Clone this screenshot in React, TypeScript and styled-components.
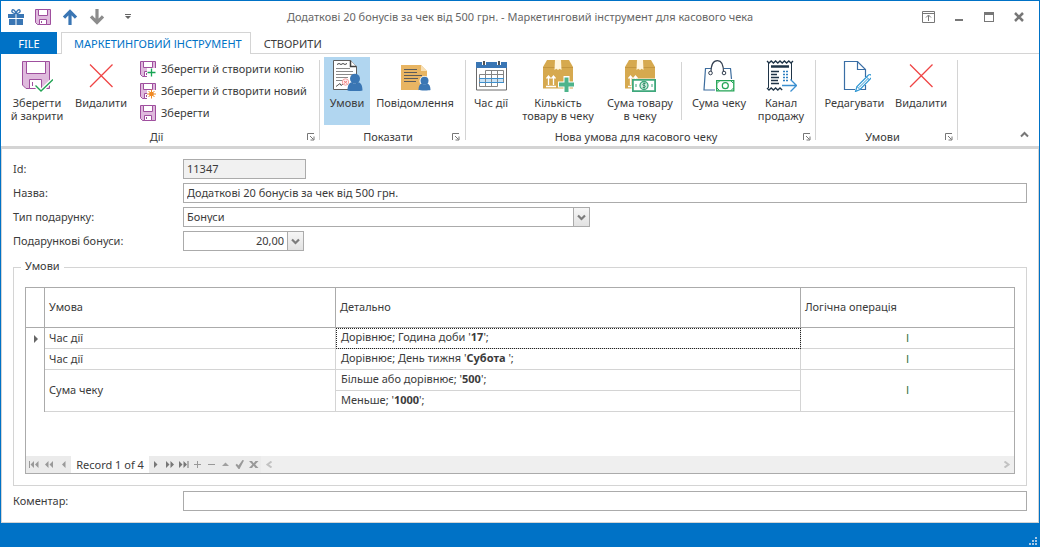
import React from "react";
import styled, { createGlobalStyle } from "styled-components";

const c = {
  blue: "#0072c6",
  text: "#3b3b3b",
  line: "#d4d4d4",
  frame: "#ababab",
  grey: "#777777",
};

const Global = createGlobalStyle`
  *, *::before, *::after { box-sizing: border-box; }
  body {
    margin: 0;
    background: #fff;
    color: ${c.text};
    font: 11px/13px "Noto Sans", "Open Sans", sans-serif;
  }
  button, input, select { font: inherit; color: inherit; margin: 0; border-radius: 0; }
  svg { display: block; flex: none; }
`;

const Window = styled.div`
  min-height: 100vh;
  display: flex;
  flex-direction: column;
  border: 1px solid ${c.blue};
`;

/* ---------- title bar ---------- */

const TitleBar = styled.header`
  display: grid;
  grid-template-columns: 1fr auto 1fr;
  align-items: center;
  height: 31px;
`;
const Title = styled.h1`
  margin: 0;
  font-size: 11px;
  line-height: 16px;
  font-weight: 400;
  color: #666;
  white-space: nowrap;
`;
const QuickAccess = styled.div`
  display: flex;
  padding-left: 1px;
`;
const WindowControls = styled.div`
  display: flex;
  justify-content: flex-end;
  padding-right: 5px;
`;
const BarButton = styled.button<{ $w: number }>`
  display: flex;
  align-items: center;
  justify-content: center;
  width: ${(p) => p.$w}px;
  height: 24px;
  padding: 0;
  border: 0;
  background: none;
`;

/* ---------- ribbon ---------- */

const Tabs = styled.nav`
  display: flex;
  height: 22px;
  box-shadow: inset 0 -1px ${c.line};
`;
const Tab = styled.button<{ $kind?: "file" | "active" }>`
  height: 22px;
  padding: 0 12px;
  border: 1px solid transparent;
  border-width: 1px 1px 0;
  background: none;
  white-space: nowrap;
  ${(p) =>
    p.$kind === "file" &&
    `width: 56px; margin-right: 4px; padding: 0; background: ${c.blue}; color: #fff;`}
  ${(p) =>
    p.$kind === "active" &&
    `padding: 0 8px 0 12px; background: #fff; border-color: ${c.line}; color: ${c.blue};`}
`;
const Ribbon = styled.div`
  display: flex;
  border-bottom: 2px solid ${c.line};
`;
const GroupBox = styled.section<{ $pad: number; $end: number }>`
  display: flex;
  flex-direction: column;
  padding: 3px ${(p) => p.$end}px 0 ${(p) => p.$pad}px;
`;
const GroupBody = styled.div`
  display: flex;
  height: 68px;
`;
const GroupFoot = styled.div`
  display: flex;
  align-items: center;
  height: 18px;
  margin-top: 3px;
`;
const GroupName = styled.h2`
  flex: 1;
  margin: 0;
  padding-bottom: 2px;
  font-size: 11px;
  font-weight: 400;
  text-align: center;
`;
const Launcher = styled.button`
  padding: 0;
  border: 0;
  background: none;
`;
const Divider = styled.div<{ $inner?: boolean }>`
  width: 1px;
  background: ${c.line};
  margin: ${(p) => (p.$inner ? "5px 5px 5px 4px" : "6px 0")};
`;
const BigButton = styled.button<{ $w: number; $on?: boolean }>`
  display: flex;
  flex-direction: column;
  align-items: center;
  gap: 4px;
  width: ${(p) => p.$w}px;
  height: 68px;
  padding: 3px 0 0;
  border: 0;
  background: ${(p) => (p.$on ? "#b1d6f0" : "none")};
  white-space: pre;
`;
const SmallColumn = styled.div`
  display: flex;
  flex-direction: column;
  padding: 1px 0 0 6px;
  width: 181px;
`;
const SmallButton = styled.button`
  display: flex;
  align-items: center;
  gap: 5px;
  height: 22px;
  padding: 0;
  border: 0;
  background: none;
  white-space: nowrap;
`;
const SmallText = styled.span`
  padding-bottom: 2px;
`;
const Collapse = styled.button`
  margin-left: auto;
  align-self: flex-end;
  padding: 8px 10px;
  border: 0;
  background: none;
`;

/* ---------- form ---------- */

const Content = styled.main`
  flex: 1;
  padding: 10px 11px 11px;
  border: 1px solid ${c.line};
`;
const Row = styled.div<{ $last?: boolean }>`
  display: grid;
  grid-template-columns: 170px minmax(0, 1fr);
  align-items: center;
  margin-bottom: ${(p) => (p.$last ? 0 : 4)}px;
`;
const Label = styled.label`
  padding-bottom: 2px;
`;
const Field = styled.div<{ $max?: number }>`
  display: flex;
  position: relative;
  max-width: ${(p) => (p.$max ? `${p.$max}px` : "none")};
`;
const TextBox = styled.input<{ $right?: boolean }>`
  width: 100%;
  height: 20px;
  padding: 0 3px 2px;
  border: 1px solid ${c.frame};
  background: #fff;
  text-align: ${(p) => (p.$right ? "right" : "left")};
  &:read-only { background: #f1f1f1; }
`;
const Select = styled.select`
  appearance: none;
  width: 100%;
  height: 20px;
  padding: 0 20px 2px 3px;
  border: 1px solid ${c.frame};
  background: #fff;
`;
const DropMark = styled.span`
  position: absolute;
  right: 0;
  top: 0;
  display: flex;
  align-items: center;
  justify-content: center;
  width: 17px;
  height: 20px;
  border: 1px solid ${c.frame};
  background: linear-gradient(#f6f6f6, #e2e2e2);
  pointer-events: none;
`;
const DropButton = styled.button`
  display: flex;
  align-items: center;
  justify-content: center;
  flex: none;
  width: 16px;
  height: 20px;
  padding: 0;
  border: 1px solid ${c.frame};
  border-left: 0;
  background: linear-gradient(#f6f6f6, #e2e2e2);
`;
const Fieldset = styled.fieldset`
  margin: 9px 0 5px;
  padding: 13px 7px 7px;
  border: 1px solid ${c.line};
`;
const Legend = styled.legend`
  height: 14px;
  line-height: 12px;
  padding: 0 4px;
`;

/* ---------- grid ---------- */

const Grid = styled.div`
  margin: 0 4px 4px;
  border: 1px solid ${c.frame};
`;
const GridBody = styled.div`
  padding-bottom: 44px;
`;
const Table = styled.table`
  width: 100%;
  table-layout: fixed;
  border-collapse: separate;
  border-spacing: 0;
`;
const Th = styled.th`
  height: 40px;
  padding: 0 4px 2px;
  border: solid ${c.frame};
  border-width: 0 1px 1px 0;
  font-weight: 400;
  text-align: left;
  &:last-child { border-right-width: 0; }
`;
const Td = styled.td<{ $logic?: boolean }>`
  height: 21px;
  padding: 0 4px 2px;
  border: solid ${c.line};
  border-width: 0 1px 1px 0;
  ${(p) => p.$logic && "border-right-width: 0; text-align: center; color: #2c6e3a;"}
`;
const Marker = styled.td`
  padding: 0 0 0 8px;
  border-right: 1px solid ${c.frame};
`;
const Detail = styled.td<{ $focus?: boolean }>`
  height: 21px;
  padding: 0 5px 4px;
  border: solid ${c.line};
  border-width: 0 1px 1px 0;
  white-space: pre;
  ${(p) => p.$focus && "outline: 1px dotted #222; outline-offset: -1px;"}
`;
const Navigator = styled.div`
  display: flex;
  align-items: center;
  height: 17px;
  background: #efefef;
`;
const NavButton = styled.button<{ $w: number; $plain?: boolean }>`
  display: flex;
  align-items: center;
  justify-content: center;
  width: ${(p) => p.$w}px;
  height: 17px;
  padding: 0;
  border: 0;
  background: ${(p) => (p.$plain ? "none" : "#ebebeb")};
`;
const Position = styled.output`
  width: 78px;
  height: 17px;
  line-height: 17px;
  text-align: center;
  background: #fff;
  white-space: nowrap;
`;
const Spacer = styled.span`
  flex: 1;
`;
const StatusBar = styled.footer`
  display: flex;
  justify-content: flex-end;
  align-items: flex-end;
  height: 23px;
  padding: 0 2px 1px 0;
  background: ${c.blue};
`;

/* ---------- icons ---------- */

const Svg = ({ w = 32, h = w, children }: { w?: number; h?: number; children: React.ReactNode }) => (
  <svg width={w} height={h} viewBox={`0 0 ${w} ${h}`} fill="none" aria-hidden="true">
    {children}
  </svg>
);

const purple = "#9f4f9e";
const lilac = "#dfbadd";

const SaveSmall = ({ badge }: { badge?: "plus" | "star" }) => (
  <Svg w={16}>
    <path d="M.5.5h15v15h-13l-2-2z" fill={lilac} stroke={purple} />
    <path d="M3.500.5h9v6h-9z" fill="#fff" stroke={purple} />
    <path d="M4.500 10.500h7v5h-7z" fill="#fff" stroke={purple} />
    <path d="M6.500 12v2" stroke={purple} />
    {badge && <path d="M7 7h9v9H7z" fill="#fff" />}
    {badge === "plus" && <path d="M11.500 7.500v8M7.500 11.500h8" stroke="#17a554" strokeWidth="1.300" />}
    {badge === "star" && (
      <>
        <path d="M11.500 6.500v9M7 11h9M8.500 8l6 6M14.500 8l-6 6" stroke="#f08a24" />
        <circle cx="11.500" cy="11" r="2.300" fill="#f08a24" />
      </>
    )}
  </Svg>
);

const SaveClose = () => (
  <Svg>
    <path d="M1.500 1.500h27v27H5l-3.500-3.500z" fill={lilac} stroke={purple} />
    <path d="M5.500 1.500h19v12h-19z" fill="#fff" stroke={purple} />
    <path d="M8.500 19.500h12v9h-12z" fill="#fff" stroke={purple} />
    <path d="M11.500 22v4" stroke={purple} />
    <path d="M14.500 25.500l5.500 5.500L32 19.500" stroke="#fff" strokeWidth="4" />
    <path d="M14.500 25.500l5.500 5.500L32 19.500" stroke="#23a455" strokeWidth="1.400" />
  </Svg>
);

const Cross = () => (
  <Svg>
    <path d="M5 4.500l22.500 22.500M27.500 4.500L5 27" stroke="#ef4444" strokeWidth="1.300" />
  </Svg>
);

const Person = ({ s = 1 }: { s?: number }) => (
  <g fill="#3a76b4" transform={`scale(${s})`}>
    <circle cx="7.500" cy="5.200" r="5" />
    <path d="M0 17c0-5 1.500-7.500 4-8.200 2 1.600 5 1.600 7 0 2.500.7 4 3.200 4 8.200-1 .8-14 .8-15 0z" />
  </g>
);

const Contract = () => (
  <Svg>
    <path d="M2.500.5h17l6 6v23h-23z" fill="#fff" stroke="#5f5f5f" />
    <path d="M19.500.5v6h6" fill="#fff" stroke="#3f3f3f" strokeWidth="1.500" />
    <path d="M6 4.500l2-1 2 1 2-1 2 1 2-1" stroke="#444" />
    <path d="M5 8.500h14M5 11.500h17M5 14.500h17M5 17.500h12M5 20.500h7" stroke="#8a8a8a" />
    <path d="M5 26.500l4-3 1 2 4-3 2 2" stroke="#555" />
    <circle cx="14.500" cy="22" r="3.200" stroke="#f5a3a3" fill="#fff0f0" />
    <path d="M13 21l3 2.500M16 21l-3 2.500" stroke="#f08080" />
    <g transform="translate(16.500 13.500)">
      <Person />
    </g>
  </Svg>
);

const Message = () => (
  <Svg>
    <path d="M2 5h20l6 6v19H2z" fill="#e8b563" />
    <path d="M22 5v6h6z" fill="#f7dfb5" />
    <path d="M5 9.500h13M5 12.500h13M5 15.500h18M5 18.500h14M5 21.500h12" stroke="#5c5c5c" strokeWidth="1.200" />
    <g transform="translate(19.500 16.500)">
      <circle cx="6" cy="4.500" r="5" fill="#fff" />
      <Person s={0.8} />
    </g>
  </Svg>
);

const Calendar = () => (
  <Svg>
    <path d="M1.500 7.500h30v22.500h-30z" fill="#fff" stroke="#6a6a6a" />
    <path d="M1 2h31v6H1z" fill="#3a76b4" />
    <path d="M7 0h4v5H7zM22 0h4v5h-4z" fill="#fff" />
    <path d="M9 1v4M24 1v4" stroke="#555" strokeWidth="2" />
    <path d="M4 18h25v4H4z" fill="#c9e3f7" />
    <path d="M10.500 10.500h18M4.500 14.500h24M4.500 26.500h18M10.500 10.500v16M16.500 10.500v16M22.500 10.500v16M28.500 10.500v12M4.500 14.500v12" stroke="#858585" />
    <path d="M4 18.500h25M4 22.500h25" stroke="#3f8fcc" />
  </Svg>
);

const Carton = () => (
  <>
    <path d="M5 0h22l4 7v21.500H1V7z" fill="#d6a94f" />
    <path d="M1 7.500h30" stroke="#c4963f" />
    <path d="M13 0h6l.5 10-1.800-1.200L16 10l-1.700-1.200L12.500 10z" fill="#fff5df" />
    <path d="M6.500 25v-8M11.500 25v-8M4.500 18.500l2-2.500 2 2.500M9.500 18.500l2-2.500 2 2.500M4 26.500h10" stroke="#fff" strokeWidth="1.300" />
  </>
);

const CartonPlus = () => (
  <Svg>
    <Carton />
    <path d="M21.500 16h6v5.500h4.500v6h-4.500V32h-6v-4.500H16v-6h5.500z" fill="#fff" />
    <path d="M22.500 17.500h4v5H32v4h-5.500V32h-4v-5.500H17v-4h5.500z" fill="#4db48b" />
  </Svg>
);

const CartonMoney = () => (
  <Svg>
    <Carton />
    <path d="M7.500 18.500H32V32H7.500z" fill="#fff" />
    <path d="M8.900 19.900h22.200v11.200H8.900z" fill="#fff" stroke="#3fa87c" strokeWidth="1.800" />
    <circle cx="20" cy="25.500" r="4" fill="#cdebdd" stroke="#3fa87c" strokeWidth="1.300" />
    <path d="M21.500 23.500h-2l-.7 1 .7 1h1.200l.7 1-.7 1h-2M20.100 22.500v6" stroke="#23805a" strokeWidth=".8" />
    <path d="M12 24v3M28 24v3" stroke="#3fa87c" />
  </Svg>
);

const BagMoney = () => (
  <Svg>
    <path d="M2.500 8.500h25l2 21.500H1z" fill="#fff" stroke="#3d6d9e" strokeWidth="1.200" />
    <path d="M8.500 8h12" stroke="#fff" strokeWidth="2" />
    <path d="M8 12.500C8 4 10.500.700 14.500.700S20.500 4 20.500 12.500" stroke="#333f50" strokeWidth="1.200" />
    <circle cx="7.500" cy="13" r="1.800" fill="#fff" stroke="#333f50" />
    <circle cx="21" cy="13" r="1.800" fill="#fff" stroke="#333f50" />
    <path d="M12 19h20v13H12z" fill="#fff" />
    <path d="M13.700 20.700h17.100v10.100H13.700z" fill="#fff" stroke="#23a455" strokeWidth="1.300" />
    <circle cx="22.300" cy="25.700" r="3" stroke="#23a455" strokeWidth="1.200" />
    <path d="M14 23.500l2.500-2.500M28 21l2.500 2.500M14 28l2.500 2.500M28 30.500l2.500-2.500" stroke="#23a455" />
  </Svg>
);

const Receipt = () => (
  <Svg>
    <path d="M2 1l2 2 2.200-2 2.200 2 2.200-2 2.200 2L15 1l2.200 2 2.200-2 2.200 2 2.200-2L26 3l2-2M2 28l2 2 2.200-2 2.200 2 2.200-2 2.200 2 2.200-2 2.200 2" stroke="#1f3447" strokeWidth="1.300" />
    <path d="M3.500 3v25M26.500 3v18" stroke="#1f3447" />
    <path d="M6 6.500h18" stroke="#1f3447" strokeWidth="2.500" />
    <path d="M6 11.500h8M6 14.500h6M6 17.500h8M6 20.500h7M6 23.500h8" stroke="#1f3447" strokeWidth="1.300" />
    <path d="M18 11.500h5M18 14.500h5M18 17.500h5M18 20.500h5" stroke="#2e7fc1" strokeWidth="1.500" strokeDasharray="2 1" />
    <path d="M17 25.500h14M25.500 19.500l6 6-6 6" stroke="#3b8fd0" strokeWidth="1.300" />
  </Svg>
);

const EditPage = () => (
  <Svg>
    <path d="M16 29.500H5.500v-28h13l8 8V17M26.500 25v4.500H19" fill="#fff" stroke="#3a6ea5" strokeWidth="1.200" />
    <path d="M18.500 1.500v8h8" stroke="#3a6ea5" strokeWidth="1.200" />
    <path d="M16.500 31.500l1.500-5 11.500-11.500q1.500-1 2.500 0t.5 2.500L21 29.500z" fill="#fff" stroke="#2f97d3" strokeWidth="1.200" />
    <path d="M18 26.500l3 3M27.500 17l3 3M20 27.500l9-9" stroke="#2f97d3" />
  </Svg>
);

const Gift = () => (
  <Svg w={16}>
    <path d="M0 5h7.500v4H0zM8.500 5H16v4H8.500zM1 10h6.500v6H1zM8.500 10H15v6H8.500z" fill="#3a76b4" />
    <path d="M8 4.500C6 4.500 3 3.500 4 1.500S7.500 2 8 4.500c.5-2.500 3-5 4-3s-2 3-4 3z" stroke="#3a76b4" strokeWidth="1.400" />
  </Svg>
);

const Arrow = ({ color, down }: { color: string; down?: boolean }) => (
  <Svg w={16}>
    <path d="M8 16V3M2 8.700L8 2.500l6 6.200" stroke={color} strokeWidth="3.200" transform={down ? "rotate(180 8 8)" : undefined} />
  </Svg>
);

const Chevron = () => (
  <Svg w={9} h={7}>
    <path d="M1 1.500l3.500 3.500L8 1.500" stroke="#7c7c7c" strokeWidth="2.200" />
  </Svg>
);

const LaunchIcon = () => (
  <Svg w={8}>
    <path d="M.5 7V.5H7M3 3l3.500 3.500M7 3.500V7H3.500" stroke={c.grey} />
  </Svg>
);

const navPaths: Record<string, React.ReactNode> = {
  first: <path d="M0 1h1v7H0zM5 1v7L1.500 4.500zM9.500 1v7L6 4.500z" />,
  prevPage: <path d="M4.500 1v7L1 4.500zM9 1v7L5.500 4.500z" />,
  prev: <path d="M6.500 1v7L3 4.500z" />,
  next: <path d="M3 1v7l3.500-3.500z" />,
  nextPage: <path d="M1 1v7l3.500-3.500zM5.500 1v7L9 4.500z" />,
  last: <path d="M0 1v7l3.500-3.500zM4.500 1v7L8 4.500zM8.500 1h1v7h-1z" />,
  add: <path d="M1 4h7v1H1zM4 1h1v7H4z" />,
  remove: <path d="M1 4h7v1H1z" />,
  edit: <path d="M1 6h7L4.500 2.500z" />,
  accept: <path d="M.5 5l1.300-1.200L3.500 5.500 7.500 0 9 .5 4.500 9h-1z" />,
  cancel: <path d="M0 1h3l1.700 2.200L6.500 1h3L6.200 4.500 9.500 8h-3L4.700 5.800 3 8H0l3.300-3.500z" />,
};

const NavIcon = ({ name, color }: { name: string; color: string }) => (
  <Svg w={10} h={9}>
    <g fill={color}>{navPaths[name]}</g>
  </Svg>
);

/* ---------- page ---------- */

const Group = (p: {
  name: string;
  pad: number;
  end?: number;
  children: React.ReactNode;
}) => (
  <>
    <GroupBox $pad={p.pad} $end={p.end ?? 4}>
      <GroupBody>{p.children}</GroupBody>
      <GroupFoot>
        <GroupName>{p.name}</GroupName>
        <Launcher aria-label={p.name}>
          <LaunchIcon />
        </Launcher>
      </GroupFoot>
    </GroupBox>
    <Divider />
  </>
);

const Big = (p: { icon: React.ReactNode; label: string; w: number; on?: boolean }) => (
  <BigButton $w={p.w} $on={p.on}>
    {p.icon}
    <span>{p.label}</span>
  </BigButton>
);

const Small = (p: { badge?: "plus" | "star"; label: string }) => (
  <SmallButton>
    <SaveSmall badge={p.badge} />
    <SmallText>{p.label}</SmallText>
  </SmallButton>
);

const navLeft = ["first", "prevPage", "prev"];
const navRight: [string, string][] = [
  ["next", c.grey],
  ["nextPage", c.grey],
  ["last", c.grey],
  ["add", "#999"],
  ["remove", "#999"],
  ["edit", "#a0a0a0"],
  ["accept", "#999"],
  ["cancel", "#999"],
];

export default function App() {
  return (
    <Window>
      <Global />
      <TitleBar>
        <QuickAccess>
          <BarButton $w={27} aria-label="Подарунок"><Gift /></BarButton>
          <BarButton $w={27} aria-label="Зберегти"><SaveSmall /></BarButton>
          <BarButton $w={27} aria-label="Попередній"><Arrow color="#3a76b4" /></BarButton>
          <BarButton $w={28} aria-label="Наступний"><Arrow color="#8c8c8c" down /></BarButton>
          <BarButton $w={34} aria-label="Налаштувати панель">
            <Svg w={6}><path d="M0 0h6v1H0zM0 2h6L3 5z" fill="#666" /></Svg>
          </BarButton>
        </QuickAccess>
        <Title>Додаткові 20 бонусів за чек від 500 грн. - Маркетинговий інструмент для касового чека</Title>
        <WindowControls>
          <BarButton $w={31} aria-label="Параметри стрічки">
            <Svg w={13} h={12}>
              <path d="M.5.5h12v11H.5zM.5 2.500h12M6.500 10V4.500M4 6.500l2.500-2.500L9 6.500" stroke={c.grey} />
            </Svg>
          </BarButton>
          <BarButton $w={30} aria-label="Згорнути">
            <Svg w={8} h={10}><path d="M0 7h8v2H0z" fill={c.grey} /></Svg>
          </BarButton>
          <BarButton $w={30} aria-label="Розгорнути">
            <Svg w={10}><path d="M0 0h10v10H0zM1 3v6h8V3z" fill={c.grey} fillRule="evenodd" /></Svg>
          </BarButton>
          <BarButton $w={30} aria-label="Закрити">
            <Svg w={10}><path d="M1 1l8 8M9 1L1 9" stroke={c.grey} strokeWidth="2.500" /></Svg>
          </BarButton>
        </WindowControls>
      </TitleBar>

      <Tabs>
        <Tab $kind="file">FILE</Tab>
        <Tab $kind="active">МАРКЕТИНГОВИЙ ІНСТРУМЕНТ</Tab>
        <Tab>СТВОРИТИ</Tab>
      </Tabs>

      <Ribbon>
        <Group name="Дії" pad={5}>
          <Big icon={<SaveClose />} label={"Зберегти\nй закрити"} w={62} />
          <Big icon={<Cross />} label="Видалити" w={66} />
          <SmallColumn>
            <Small badge="plus" label="Зберегти й створити копію" />
            <Small badge="star" label="Зберегти й створити новий" />
            <Small label="Зберегти" />
          </SmallColumn>
        </Group>
        <Group name="Показати" pad={4} end={5}>
          <Big icon={<Contract />} label="Умови" w={46} on />
          <Big icon={<Message />} label="Повідомлення" w={90} />
        </Group>
        <Group name="Нова умова для касового чеку" pad={3}>
          <Big icon={<Calendar />} label="Час дії" w={44} />
          <Big icon={<CartonPlus />} label={"Кількість\nтовару в чеку"} w={90} />
          <Big icon={<CartonMoney />} label={"Сума товару\nв чеку"} w={74} />
          <Divider $inner />
          <Big icon={<BagMoney />} label="Сума чеку" w={64} />
          <Big icon={<Receipt />} label={"Канал\nпродажу"} w={60} />
        </Group>
        <Group name="Умови" pad={4}>
          <Big icon={<EditPage />} label="Редагувати" w={69} />
          <Big icon={<Cross />} label="Видалити" w={64} />
        </Group>
        <Collapse aria-label="Згорнути стрічку">
          <Svg w={9} h={7}><path d="M1 5.500L4.500 2 8 5.500" stroke={c.grey} strokeWidth="2" /></Svg>
        </Collapse>
      </Ribbon>

      <Content>
        <Row>
          <Label htmlFor="id">Id:</Label>
          <Field $max={123}><TextBox id="id" value="11347" readOnly /></Field>
        </Row>
        <Row>
          <Label htmlFor="name">Назва:</Label>
          <Field><TextBox id="name" defaultValue="Додаткові 20 бонусів за чек від 500 грн." /></Field>
        </Row>
        <Row>
          <Label htmlFor="type">Тип подарунку:</Label>
          <Field $max={407}>
            <Select id="type"><option>Бонуси</option></Select>
            <DropMark><Chevron /></DropMark>
          </Field>
        </Row>
        <Row>
          <Label htmlFor="bonus">Подарункові бонуси:</Label>
          <Field $max={121}>
            <TextBox id="bonus" defaultValue="20,00" $right />
            <DropButton aria-label="Калькулятор"><Chevron /></DropButton>
          </Field>
        </Row>

        <Fieldset>
          <Legend>Умови</Legend>
          <Grid>
            <GridBody>
              <Table>
                <colgroup>
                  <col style={{ width: 19 }} />
                  <col style={{ width: "29.45%" }} />
                  <col style={{ width: "47.06%" }} />
                  <col />
                </colgroup>
                <thead>
                  <tr>
                    <Th aria-label="Поточний запис" />
                    <Th>Умова</Th>
                    <Th>Детально</Th>
                    <Th>Логічна операція</Th>
                  </tr>
                </thead>
                <tbody>
                  <tr>
                    <Marker>
                      <Svg w={5} h={8}><path d="M0 0v8l4-4z" fill="#666" /></Svg>
                    </Marker>
                    <Td>Час дії</Td>
                    <Detail $focus>Дорівнює; Година доби '<b>17</b>';</Detail>
                    <Td $logic>І</Td>
                  </tr>
                  <tr>
                    <Marker />
                    <Td>Час дії</Td>
                    <Detail>Дорівнює; День тижня '<b>Субота</b> ';</Detail>
                    <Td $logic>І</Td>
                  </tr>
                  <tr>
                    <Marker rowSpan={2} />
                    <Td rowSpan={2}>Сума чеку</Td>
                    <Detail>Більше або дорівнює; '<b>500</b>';</Detail>
                    <Td $logic rowSpan={2}>І</Td>
                  </tr>
                  <tr>
                    <Detail>Меньше; '<b>1000</b>';</Detail>
                  </tr>
                </tbody>
              </Table>
            </GridBody>
            <Navigator>
              {navLeft.map((n) => (
                <NavButton key={n} $w={15} aria-label={n}><NavIcon name={n} color="#999" /></NavButton>
              ))}
              <Position>Record 1 of 4</Position>
              {navRight.map(([n, color]) => (
                <NavButton key={n} $w={14} aria-label={n}><NavIcon name={n} color={color} /></NavButton>
              ))}
              <NavButton $w={16} $plain aria-label="Прокрутити ліворуч">
                <Svg w={7}><path d="M5.500.5l-4 3 4 3" stroke="#c2c2c2" strokeWidth="2" /></Svg>
              </NavButton>
              <Spacer />
              <NavButton $w={16} $plain aria-label="Прокрутити праворуч">
                <Svg w={7}><path d="M1.500.5l4 3-4 3" stroke="#c2c2c2" strokeWidth="2" /></Svg>
              </NavButton>
            </Navigator>
          </Grid>
        </Fieldset>

        <Row $last>
          <Label htmlFor="comment">Коментар:</Label>
          <Field><TextBox id="comment" /></Field>
        </Row>
      </Content>

      <StatusBar>
        <Svg w={8}><path d="M6 0h2v2H6zM3 3h2v2H3zM6 3h2v2H6zM0 6h2v2H0zM3 6h2v2H3zM6 6h2v2H6z" fill="#a9c9e6" /></Svg>
      </StatusBar>
    </Window>
  );
}
